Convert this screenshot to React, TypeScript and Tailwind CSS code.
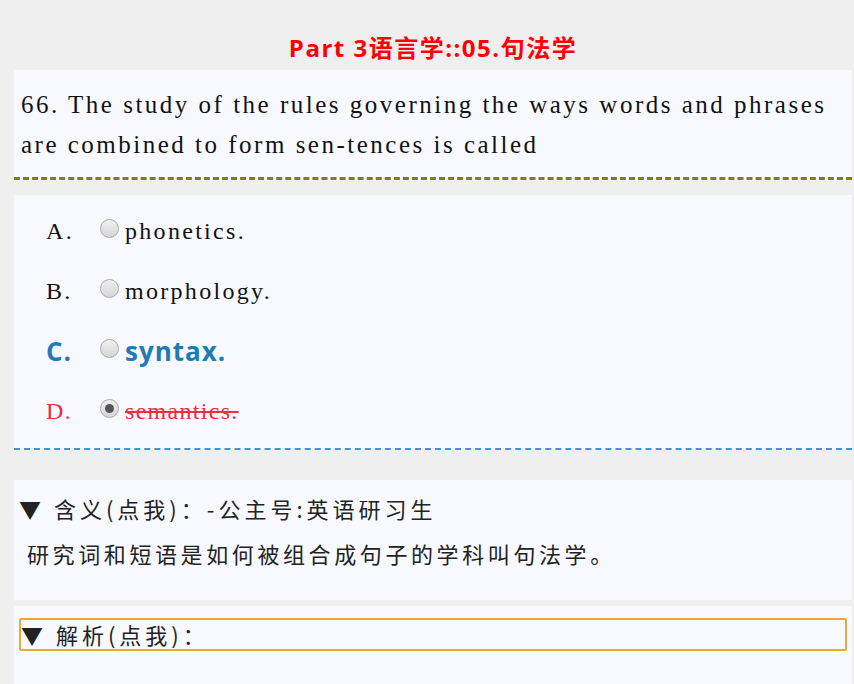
import React from 'react';

type Option = {
  key: string;
  text: string;
  state?: 'correct' | 'wrong';
  checked?: boolean;
};

const options: Option[] = [
  { key: 'A.', text: 'phonetics.' },
  { key: 'B.', text: 'morphology.' },
  { key: 'C.', text: 'syntax.', state: 'correct' },
  { key: 'D.', text: 'semantics.', state: 'wrong', checked: true },
];

const serif = "font-['Liberation_Serif','Times_New_Roman',serif]";
const sans = "font-['Open_Sans','Noto_Sans_CJK_SC',sans-serif]";

const Radio: React.FC<{ checked?: boolean }> = ({ checked }) => (
  <span className="mt-[-5px] flex h-[19px] w-[19px] shrink-0 items-center justify-center rounded-full border border-[#a9a9a9] bg-gradient-to-b from-[#f0f0f0] to-[#d6d6d6]">
    {checked && <span className="h-[9px] w-[9px] rounded-full bg-[#555555]" />}
  </span>
);

export default function App() {
  return (
    <div className="min-h-[684px] bg-[#efefef] pl-[14px] pr-[2px]">
      <h2 className="flex h-[70px] items-end justify-center pb-[4px] font-['Open_Sans','Noto_Sans_CJK_SC',sans-serif] text-[24px] font-bold tracking-[1.5px] text-[#ff0000]">
        Part 3语言学::05.句法学
      </h2>

      {/* question */}
      <div className="border-b-[3px] border-dashed border-[#808000] bg-[#f8f9ff] px-[7px] pb-[12px] pt-[15px]">
        <p className={`${serif} text-[25px] leading-[40px] tracking-[2.5px] text-[#111]`}>
          66. The study of the rules governing the ways words and phrases are combined to form sen-tences is called
        </p>
      </div>

      {/* options */}
      <div className="mt-[15px] border-b-2 border-dashed border-[#3498db] bg-[#f8f9ff] pb-[7px] pt-[6px]">
        {options.map((o) => {
          const color =
            o.state === 'correct' ? 'text-[#1f7bb6]' : o.state === 'wrong' ? 'text-[#e8303f]' : 'text-[#111]';
          const font =
            o.state === 'correct'
              ? `${sans} font-bold text-[26px] tracking-[1px]`
              : o.state === 'wrong'
                ? `${serif} text-[24px] tracking-[1.3px]`
                : `${serif} text-[24px] tracking-[2.3px]`;
          return (
            <div key={o.key} className={`flex h-[60px] items-center ${color}`}>
              <span className={`w-[86px] pl-[32px] ${font}`}>{o.key}</span>
              <Radio checked={o.checked} />
              <span className={`ml-[6px] ${font} ${o.state === 'wrong' ? 'line-through decoration-[2px]' : ''}`}>
                {o.text}
              </span>
            </div>
          );
        })}
      </div>

      {/* meaning */}
      <div className="mt-[30px] h-[120px] bg-[#f8f9ff] px-[5px] pt-[13px] font-['Noto_Sans_CJK_SC',sans-serif] text-[22px] text-[#222]">
        <div className="leading-[30px] tracking-[4px]">▼ 含义(点我)：-公主号:英语研习生</div>
        <div className="mt-[15px] pl-[8px] leading-[30px] tracking-[3.6px]">研究词和短语是如何被组合成句子的学科叫句法学。</div>
      </div>

      {/* analysis */}
      <div className="mt-[6px] h-[78px] bg-[#f8f9ff] px-[5px] pt-[12px] font-['Noto_Sans_CJK_SC',sans-serif] text-[22px] text-[#222]">
        <div className="flex h-[33px] items-center rounded-[2px] border-2 border-[#e8a83a] tracking-[4px]">▼ 解析(点我)：</div>
      </div>
    </div>
  );
}
